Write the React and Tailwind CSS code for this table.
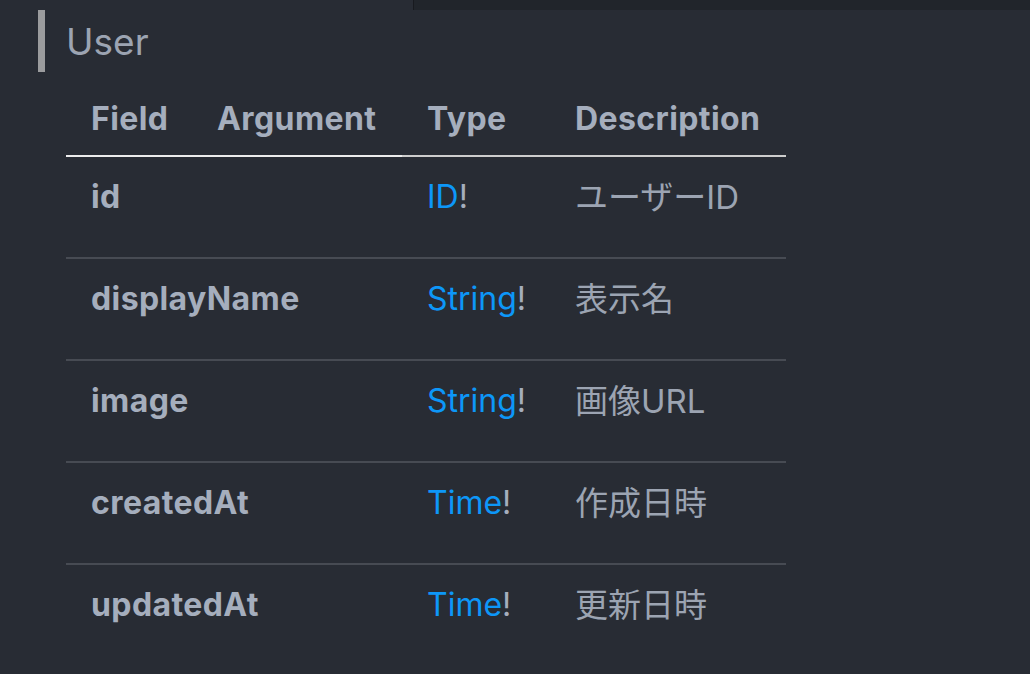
import React from "react";

const rows = [
  { field: "id", type: "ID", desc: "ユーザーID" },
  { field: "displayName", type: "String", desc: "表示名" },
  { field: "image", type: "String", desc: "画像URL" },
  { field: "createdAt", type: "Time", desc: "作成日時" },
  { field: "updatedAt", type: "Time", desc: "更新日時" },
];

export default function App() {
  const font = {
    fontFamily: 'Inter, "Noto Sans CJK JP", "Noto Sans", sans-serif',
  };
  return (
    <div
      className="w-[1030px] h-[674px] bg-[#282c34] overflow-hidden flex flex-col"
      style={font}
    >
      <div className="flex h-[10px] shrink-0">
        <div className="w-[413px]" />
        <div className="flex-1 bg-[#21252b] border-l border-[#181a1f]" />
      </div>

      <div className="ml-[38px] h-[62px] border-l-[7px] border-[#9b9c9e] pl-[21px] flex items-start">
        <span className="text-[37px] leading-[62px] text-[#9ca4b2] font-normal mt-[1px]">
          User
        </span>
      </div>

      <table className="ml-[66px] mt-[6px] w-[720px] border-separate border-spacing-0 table-fixed">
        <colgroup>
          <col className="w-[126px]" />
          <col className="w-[210px]" />
          <col className="w-[148px]" />
          <col className="w-[236px]" />
        </colgroup>
        <thead>
          <tr className="text-[32px] leading-[48px] font-bold text-[#a5aebd] text-left tracking-[0.4px]">
            <th className="pl-[25px] pt-[17px] pb-[12px] border-b-2 border-[#ececec] whitespace-nowrap">
              Field
            </th>
            <th className="pl-[25px] pt-[17px] pb-[12px] border-b-2 border-[#ececec] whitespace-nowrap">
              Argument
            </th>
            <th className="pl-[25px] pt-[17px] pb-[12px] border-b-2 border-[#cdcdcd] whitespace-nowrap">
              Type
            </th>
            <th className="pl-[25px] pt-[17px] pb-[12px] border-b-2 border-[#cdcdcd] whitespace-nowrap">
              Description
            </th>
          </tr>
        </thead>
        <tbody>
          {rows.map((r, i) => {
            const last = i === rows.length - 1;
            const b = last ? "" : "border-b-2 border-[#474b53]";
            return (
              <tr key={r.field} className="text-[32px] leading-[48px] align-top">
                <td
                  colSpan={2}
                  className={`pl-[25px] pt-[16px] pb-[36px] font-bold text-[#a5aebd] whitespace-nowrap tracking-[0.4px] ${b}`}
                >
                  {r.field}
                </td>
                <td className={`pl-[25px] pt-[16px] pb-[36px] whitespace-nowrap ${b}`}>
                  <span className="text-[#0d97f8]">{r.type}</span>
                  <span className="text-[#a5aebd]">!</span>
                </td>
                <td className={`pl-[25px] pt-[16px] pb-[36px] whitespace-nowrap text-[#9ca4b2] text-[33px] ${b}`}>
                  {r.desc}
                </td>
              </tr>
            );
          })}
        </tbody>
      </table>
    </div>
  );
}
